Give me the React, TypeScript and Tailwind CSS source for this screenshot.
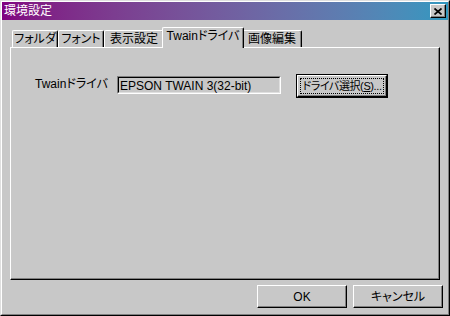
import React from 'react';

const btn =
  'flex items-center justify-center bg-[#c8c8c8] border border-t-white border-l-white border-r-black border-b-black shadow-[inset_-1px_-1px_#808080] text-black';

const Tab = ({ label, width, active }: { label: string; width: string; active?: boolean }) =>
  active ? (
    <div
      className={`relative z-10 -mx-[2px] -mb-px flex h-[21px] justify-center rounded-t-[2px] border-t border-l border-r border-t-white border-l-white border-r-black bg-[#c8c8c8] pt-[1px] shadow-[inset_-1px_0_#808080] ${width}`}
    >
      {label}
    </div>
  ) : (
    <div
      className={`flex h-[17px] justify-center rounded-t-[2px] border-t border-l border-r border-t-white border-l-white border-r-black pt-[1px] shadow-[inset_-1px_0_#808080] ${width}`}
    >
      {label}
    </div>
  );

export default function App() {
  return (
    <div className="w-[450px] h-[316px] bg-[#c8c8c8] border border-t-[#dfdfdf] border-l-[#dfdfdf] border-r-black border-b-black text-[12px] leading-[14px] text-black font-['Liberation_Sans','Noto_Sans_CJK_JP',sans-serif] [font-feature-settings:'palt']">
      <div className="flex h-full flex-col border border-t-white border-l-white border-r-[#808080] border-b-[#808080]">
        {/* title bar */}
        <div className="flex h-[18px] items-center bg-linear-to-r from-[#800080] to-[#3098c0] pl-[2px] pr-[2px]">
          <span className="text-white">環境設定</span>
          <button className={`${btn} ml-auto h-[14px] w-[16px]`}>
            <svg width="8" height="7" viewBox="0 0 8 7">
              <path d="M0.5 0.5 L7.5 6.5 M7.5 0.5 L0.5 6.5" stroke="black" strokeWidth="1.7" />
            </svg>
          </button>
        </div>

        {/* tabs + panel */}
        <div className="ml-[8px] flex flex-col pt-[7px]">
          <div className="ml-[2px] flex h-[20px] items-end">
            <Tab label="フォルダ" width="w-[46px]" />
            <Tab label="フォント" width="w-[46px]" />
            <Tab label="表示設定" width="w-[60px]" />
            <Tab label="Twainドライバ" width="w-[82px]" active />
            <Tab label="画像編集" width="w-[60px]" />
          </div>
          <div className="h-[233px] w-[430px] border border-t-white border-l-white border-r-black border-b-black shadow-[inset_-1px_-1px_#808080]">
            <div className="flex items-start pl-[24px] pt-[26px]">
              <div className="mt-[3px] w-[82px]">Twainドライバ</div>
              <div className="mt-[2px] h-[18px] w-[164px] border border-t-[#808080] border-l-[#808080] border-r-white border-b-white">
                <div className="h-full whitespace-nowrap border border-t-black border-l-black border-r-[#dfdfdf] border-b-[#dfdfdf] pl-[1px] pt-[1px]">
                  EPSON TWAIN 3(32-bit)
                </div>
              </div>
              <div className="ml-[15px] h-[24px] w-[92px] border border-black">
                <div className={`${btn} h-full w-full p-[2px]`}>
                  <div className="h-full w-full overflow-visible whitespace-nowrap border border-dotted border-black text-center text-[11px] leading-[14px] tracking-[-0.4px]">
                    ドライバ選択(<span className="underline">S</span>)...
                  </div>
                </div>
              </div>
            </div>
          </div>
        </div>

        {/* buttons */}
        <div className="mt-[5px] flex justify-end gap-[6px] pr-[5px]">
          <button className={`${btn} h-[23px] w-[90px]`}>OK</button>
          <button className={`${btn} h-[23px] w-[90px]`}>キャンセル</button>
        </div>
      </div>
    </div>
  );
}
